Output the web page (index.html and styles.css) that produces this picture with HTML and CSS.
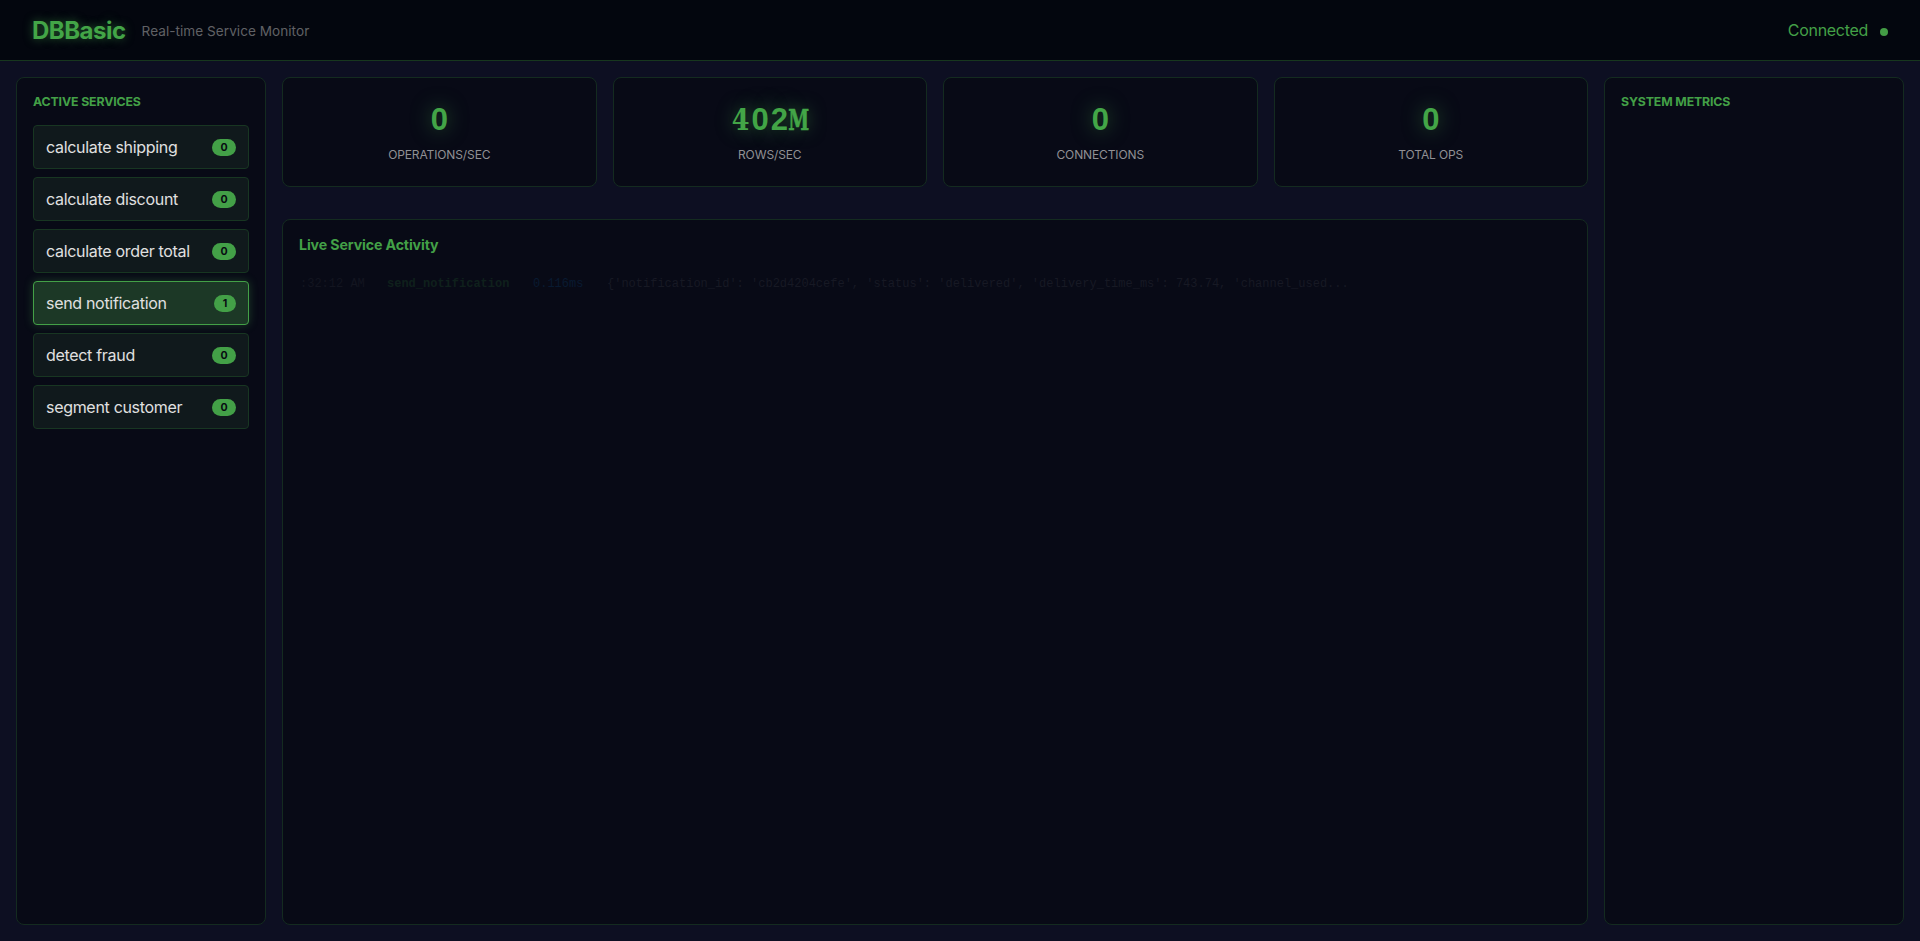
FILE: index.html
```html
<!DOCTYPE html>
<html lang="en">
<head>
<meta charset="utf-8">
<title>DBBasic</title>
<link rel="stylesheet" href="styles.css">
</head>
<body>
<header class="header">
  <div class="brand"><span class="logo">DBBasic</span><span class="tagline">Real-time Service Monitor</span></div>
  <div class="status"><span>Connected</span><span class="dot"></span></div>
</header>
<main class="layout">
  <aside class="panel">
    <h2 class="panel-title">Active Services</h2>
    <ul class="services">
      <li class="service"><span class="name">calculate shipping</span><span class="badge">0</span></li>
      <li class="service"><span class="name">calculate discount</span><span class="badge">0</span></li>
      <li class="service"><span class="name">calculate order total</span><span class="badge">0</span></li>
      <li class="service active"><span class="name">send notification</span><span class="badge one">1</span></li>
      <li class="service"><span class="name">detect fraud</span><span class="badge">0</span></li>
      <li class="service"><span class="name">segment customer</span><span class="badge">0</span></li>
    </ul>
  </aside>
  <div class="center">
    <section class="stats">
      <div class="panel stat"><div class="value"><span class="cell">0</span></div><div class="label">Operations/sec</div></div>
      <div class="panel stat"><div class="value"><span class="cell slab">4</span><span class="cell">0</span><span class="cell">2</span><span class="cell unit">M</span></div><div class="label">Rows/sec</div></div>
      <div class="panel stat"><div class="value"><span class="cell">0</span></div><div class="label">Connections</div></div>
      <div class="panel stat"><div class="value"><span class="cell">0</span></div><div class="label">Total Ops</div></div>
    </section>
    <section class="panel activity">
      <h2 class="activity-title">Live Service Activity</h2>
      <div class="log"><span class="time">:32:12 AM</span><span class="fn">send_notification</span><span class="ms">0.116ms</span><span class="result">{'notification_id': 'cb2d4204cefe', 'status': 'delivered', 'delivery_time_ms': 743.74, 'channel_used...</span></div>
    </section>
  </div>
  <aside class="panel">
    <h2 class="panel-title">System Metrics</h2>
  </aside>
</main>
</body>
</html>
```
FILE: styles.css
```css
* { box-sizing: border-box; margin: 0; padding: 0; }
body {
  height: 100vh;
  display: flex;
  flex-direction: column;
  overflow: hidden;
  background: #0d0f22;
  color: #e0e0e0;
  font-family: Inter, "Liberation Sans", sans-serif;
}
.header {
  height: 61px;
  flex: none;
  display: flex;
  align-items: center;
  justify-content: space-between;
  padding: 0 32px;
  background: #03060e;
  border-bottom: 1px solid #17371e;
}
.brand { display: flex; align-items: center; gap: 16px; }
.logo {
  padding-top: 2px;
  font-size: 24px;
  line-height: 28px;
  font-weight: 700;
  letter-spacing: -0.5px;
  color: #43a547;
  text-shadow: 0 0 10px rgba(76, 175, 80, 0.5);
}
.tagline { font-size: 13.6px; line-height: 16px; letter-spacing: 0.03px; color: #606165; padding-top: 2px; }
.status { display: flex; align-items: center; gap: 12px; color: #43a047; font-size: 16px; line-height: 20px; letter-spacing: -0.3px; }
.dot { width: 8px; height: 8px; margin-top: 3px; border-radius: 50%; background: #439c45; }
.layout {
  flex: 1;
  min-height: 0;
  display: grid;
  grid-template-columns: 250px 1fr 300px;
  gap: 16px;
  padding: 16px;
}
.panel {
  background: #080a16;
  border: 1px solid #142b20;
  border-radius: 8px;
  padding: 16px;
}
.panel-title {
  font-size: 12.3px;
  line-height: 16px;
  font-weight: 700;
  letter-spacing: -0.12px;
  color: #43a047;
  text-transform: uppercase;
  margin-bottom: 15px;
}
.services { list-style: none; display: flex; flex-direction: column; gap: 8px; }
.service {
  height: 44px;
  display: flex;
  align-items: center;
  justify-content: space-between;
  padding: 0 12px;
  background: #10191c;
  border: 1px solid #183622;
  border-radius: 4px;
}
.service.active {
  background: #1c3826;
  border-color: #43a047;
  box-shadow: 0 0 10px rgba(76, 175, 80, 0.3);
}
.name { font-size: 16px; line-height: 20px; letter-spacing: -0.31px; white-space: nowrap; }
.badge {
  width: 24px;
  height: 17px;
  border-radius: 9px;
  background: #43a047;
  color: #080c12;
  font-size: 10.6px;
  line-height: 18px;
  font-weight: 700;
  text-align: center;
}
.badge.one { width: 22px; }
.center { display: flex; flex-direction: column; gap: 32px; min-width: 0; }
.stats { display: grid; grid-template-columns: repeat(4, 1fr); gap: 16px; }
.stat { height: 110px; text-align: center; padding-top: 23px; }
.value {
  display: flex;
  justify-content: center;
  align-items: baseline;
  height: 38px;
  font-family: "Liberation Sans", sans-serif;
  font-size: 31px;
  line-height: 38px;
  font-weight: 700;
  color: #43a547;
  text-shadow: 0 0 20px rgba(76, 175, 80, 0.5);
}
.cell { display: flex; justify-content: center; width: 19.2px; }
.slab { font-family: "DejaVu Serif", serif; font-size: 30px; transform: scaleX(0.85); }
.unit { font-family: "DejaVu Serif", serif; font-size: 27px; transform: scaleX(0.7); -webkit-text-stroke: 0.6px #43a547; }
.label { margin-top: 8px; font-size: 12px; line-height: 16px; letter-spacing: -0.12px; color: #909094; text-transform: uppercase; }
.activity { flex: 1; }
.activity-title { font-size: 14.2px; line-height: 18px; font-weight: 700; letter-spacing: -0.13px; color: #43a047; }
.log {
  display: flex;
  margin-top: 22px;
  font-family: "Liberation Mono", monospace;
  font-size: 12px;
  line-height: 16px;
  padding-left: 1px;
  white-space: pre;
}
.time { width: 87px; color: #131520; }
.fn { width: 146px; color: #0f201c; font-weight: 700; }
.ms { width: 74px; color: #081a31; }
.result { color: #171924; }
```
